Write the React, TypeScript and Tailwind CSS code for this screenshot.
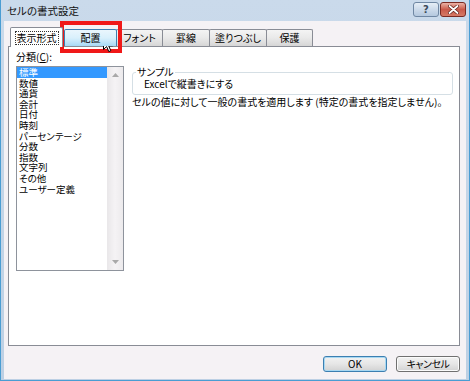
import React from "react";

const items = ["標準", "数値", "通貨", "会計", "日付", "時刻", "パーセンテージ", "分数", "指数", "文字列", "その他", "ユーザー定義"];

const font = "font-['Noto_Sans_CJK_JP','Noto_Sans',sans-serif] [font-feature-settings:'palt']";

function Tab({ label, w, kind }: { label: string; w: string; kind: "sel" | "hover" | "normal" }) {
  if (kind === "sel") {
    return (
      <div className={`${w} h-[20px] -mb-px relative z-10 bg-white border border-b-0 border-[#898c95] rounded-t-[2px] flex items-center justify-center`}>
        <span className="border border-dotted border-[#333] px-[1px] leading-[12px] h-[14px] flex items-center">{label}</span>
      </div>
    );
  }
  const cls =
    kind === "hover"
      ? "bg-gradient-to-b from-[#eaf6fd] via-[#d9f0fc] to-[#a7d9f5] border-[#3c7fb1] relative z-[5]"
      : "bg-gradient-to-b from-[#f4f4f4] via-[#e9e9e9] to-[#d6d6d6] border-[#898c95]";
  return (
    <div className={`${w} h-[17px] -ml-px border border-b-0 rounded-t-[2px] flex items-center justify-center ${cls}`}>
      <span className="leading-[12px]">{label}</span>
    </div>
  );
}

export default function App() {
  return (
    <div className={`relative w-[470px] h-[381px] overflow-hidden text-[10px] text-black ${font}`}>
      <div className="w-full h-full flex flex-col bg-gradient-to-b from-[#cadaeb] to-[#bdd0e4] border-l border-r border-b border-[#4a9dd3] px-[3px] pb-[1px]">
        {/* title bar */}
        <div className="h-[21px] flex items-center shrink-0">
          <span className="pl-[3px] text-[10.5px] leading-[14px] text-[#111]">セルの書式設定</span>
          <div className="ml-auto flex gap-[1px] mb-[2px]">
            <div className="w-[26px] h-[15px] rounded-[3px] border border-[#6f87a3] bg-gradient-to-b from-[#e6eef6] via-[#ccdaea] to-[#b4c8de] flex items-center justify-center">
              <span className="text-[10px] leading-[10px] font-bold text-[#3b4a5a] font-['DejaVu_Sans',sans-serif]">?</span>
            </div>
            <div className="w-[26px] h-[15px] rounded-[3px] border border-[#7a2a22] bg-gradient-to-b from-[#eab2a6] via-[#c9594a] to-[#d67a66] flex items-center justify-center">
              <svg width="11" height="9" viewBox="0 0 11 9">
                <path d="M1.5 1 L9.5 8 M9.5 1 L1.5 8" stroke="#5a1e18" strokeWidth="3.2" strokeLinecap="round" />
                <path d="M1.5 1 L9.5 8 M9.5 1 L1.5 8" stroke="#ffffff" strokeWidth="1.8" strokeLinecap="round" />
              </svg>
            </div>
          </div>
        </div>
        {/* client */}
        <div className="flex-1 bg-[#f5f2f5] flex flex-col">
          {/* tabs */}
          <div className="h-[19px] mt-[6px] pl-[6px] flex items-end shrink-0">
            <Tab label="表示形式" w="w-[53px]" kind="sel" />
            <div className="w-[2px]" />
            <Tab label="配置" w="w-[53px]" kind="hover" />
            <Tab label="フォント" w="w-[47px]" kind="normal" />
            <Tab label="罫線" w="w-[48px]" kind="normal" />
            <Tab label="塗りつぶし" w="w-[58px]" kind="normal" />
            <Tab label="保護" w="w-[47px]" kind="normal" />
          </div>
          {/* panel */}
          <div className="ml-[4px] w-[452px] h-[300px] shrink-0 bg-white border border-[#898c95] flex pt-[4px] pl-[7px]">
            <div className="flex flex-col w-[108px]">
              <div className="leading-[12px] h-[12px]">
                分類(<span className="underline">C</span>):
              </div>
              <div className="mt-[3px] h-[205px] border border-[#8e939c] flex">
                <div className="w-[90px] flex flex-col text-[9.5px]">
                  {items.map((it, i) => (
                    <div
                      key={it}
                      className={`h-[10.6px] leading-[10.6px] pl-[2px] whitespace-nowrap ${i === 0 ? "bg-[#3399ff] text-white" : ""}`}
                    >
                      {it}
                    </div>
                  ))}
                </div>
                <div className="w-[16px] bg-gradient-to-r from-[#e9e7e9] via-[#f5f3f5] to-[#eceaec] flex flex-col items-center justify-between py-[6px]">
                  <svg width="7" height="4" viewBox="0 0 7 4"><path d="M0 4 L3.5 0 L7 4 Z" fill="#a9a9a9" /></svg>
                  <svg width="7" height="4" viewBox="0 0 7 4"><path d="M0 0 L3.5 4 L7 0 Z" fill="#a9a9a9" /></svg>
                </div>
              </div>
            </div>
            <div className="ml-[8px] mt-[21px] flex flex-col w-[321px]">
              <div className="relative h-[23px] border border-[#d5dfe5] rounded-[3px] flex items-center pl-[11px]">
                <span className="absolute -top-[7px] left-[3px] bg-white px-[1px] leading-[12px]">サンプル</span>
                <span className="leading-[12px]">Excelで縦書きにする</span>
              </div>
              <div className="mt-[1px] leading-[12px] whitespace-nowrap">
                セルの値に対して一般の書式を適用します (特定の書式を指定しません)。
              </div>
            </div>
          </div>
          {/* buttons */}
          <div className="mt-[10px] flex justify-end gap-[9px] pr-[6px]">
            <div className="w-[64px] h-[16px] rounded-[3px] border border-[#3c7fb1] bg-gradient-to-b from-[#f2f2f2] via-[#e6e6e6] to-[#d2d2d2] flex items-center justify-center shadow-[inset_0_0_0_1px_#a8d8f2]">
              <span className="leading-[12px]">OK</span>
            </div>
            <div className="w-[64px] h-[16px] rounded-[3px] border border-[#707070] bg-gradient-to-b from-[#f2f2f2] via-[#e6e6e6] to-[#d2d2d2] flex items-center justify-center shadow-[inset_0_0_0_1px_#fbfbfb]">
              <span className="leading-[12px] tracking-[-0.5px]">キャンセル</span>
            </div>
          </div>
        </div>
      </div>
      {/* red highlight box */}
      <div className="absolute left-[60px] top-[21px] w-[62px] h-[32px] border-4 border-[#f01818]" />
      {/* cursor */}
      <svg className="absolute left-[103px] top-[36px]" width="12" height="17" viewBox="0 0 12 17">
        <path d="M0.5 0.5 L0.5 13.5 L3.6 10.6 L5.8 15.6 L7.8 14.7 L5.7 9.8 L9.8 9.8 Z" fill="#fff" stroke="#000" strokeWidth="1" strokeLinejoin="miter" />
      </svg>
    </div>
  );
}
